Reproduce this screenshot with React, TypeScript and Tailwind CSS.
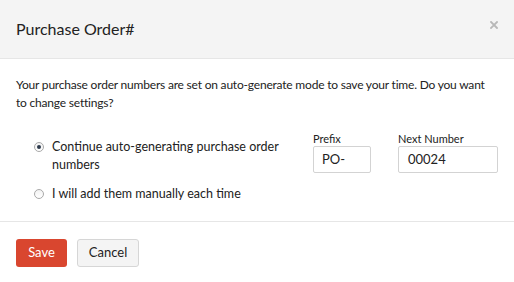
import React from "react";

function Radio({ checked }: { checked?: boolean }) {
  return (
    <span className="mt-[4px] flex h-[10px] w-[10px] shrink-0 items-center justify-center rounded-full border border-[#a9a9a9] bg-gradient-to-b from-[#f2f2f2] to-white">
      {checked && <span className="h-[4px] w-[4px] rounded-full bg-[#2d3a4c]" />}
    </span>
  );
}

export default function App() {
  return (
    <div className="w-[514px] h-[282px] bg-white text-[#222] overflow-hidden" style={{ fontFamily: 'Lato, "Liberation Sans", Arial, sans-serif' }}>
      <div className="flex h-[59px] items-start justify-between border-b border-[#e6e6e6] bg-[#f4f4f4] pl-4 pr-[16px]">
        <div className="pt-[19px] text-[16px] leading-[20px] text-[#222]">Purchase Order#</div>
        <svg className="mt-[21px]" width="8" height="8" viewBox="0 0 8 8">
          <path d="M1 1L7 7M7 1L1 7" stroke="#b8b8b8" strokeWidth="1.8" strokeLinecap="square" />
        </svg>
      </div>
      <div className="px-4 pt-[17px] pb-[18px] border-b border-[#e6e6e6]">
        <p className="w-[478px] text-[12px] leading-[18px] tracking-[-0.2px]">
          Your purchase order numbers are set on auto-generate mode to save your time. Do you want to change settings?
        </p>
        <div className="mt-[19px] flex">
          <div className="ml-[18px] flex w-[266px] flex-col gap-[11px] pt-[7px] text-[12.5px] leading-[18px]">
            <label className="flex items-start gap-[8px]">
              <Radio checked />
              <span className="w-[236px]">Continue auto-generating purchase order numbers</span>
            </label>
            <label className="flex items-start gap-[8px]">
              <Radio />
              <span>I will add them manually each time</span>
            </label>
          </div>
          <div className="ml-[14px] flex flex-col">
            <span className="text-[11px] leading-[15px]">Prefix</span>
            <div className="flex h-[27px] w-[58px] items-center rounded-[2px] border border-[#d3d3d3] px-[8px] text-[13px]">PO-</div>
          </div>
          <div className="ml-[27px] flex flex-col">
            <span className="text-[11px] leading-[15px]">Next Number</span>
            <div className="flex h-[27px] w-[100px] items-center rounded-[2px] border border-[#d3d3d3] px-[9px] text-[13px]">00024</div>
          </div>
        </div>
      </div>
      <div className="flex gap-[10px] px-4 pt-[17px]">
        <button className="h-[28px] w-[51px] rounded-[3px] bg-[#d9462f] text-[13px] text-white">Save</button>
        <button className="h-[28px] w-[62px] rounded-[3px] border border-[#d6d6d6] bg-[#f4f4f4] text-[13px] text-[#222]">Cancel</button>
      </div>
    </div>
  );
}
